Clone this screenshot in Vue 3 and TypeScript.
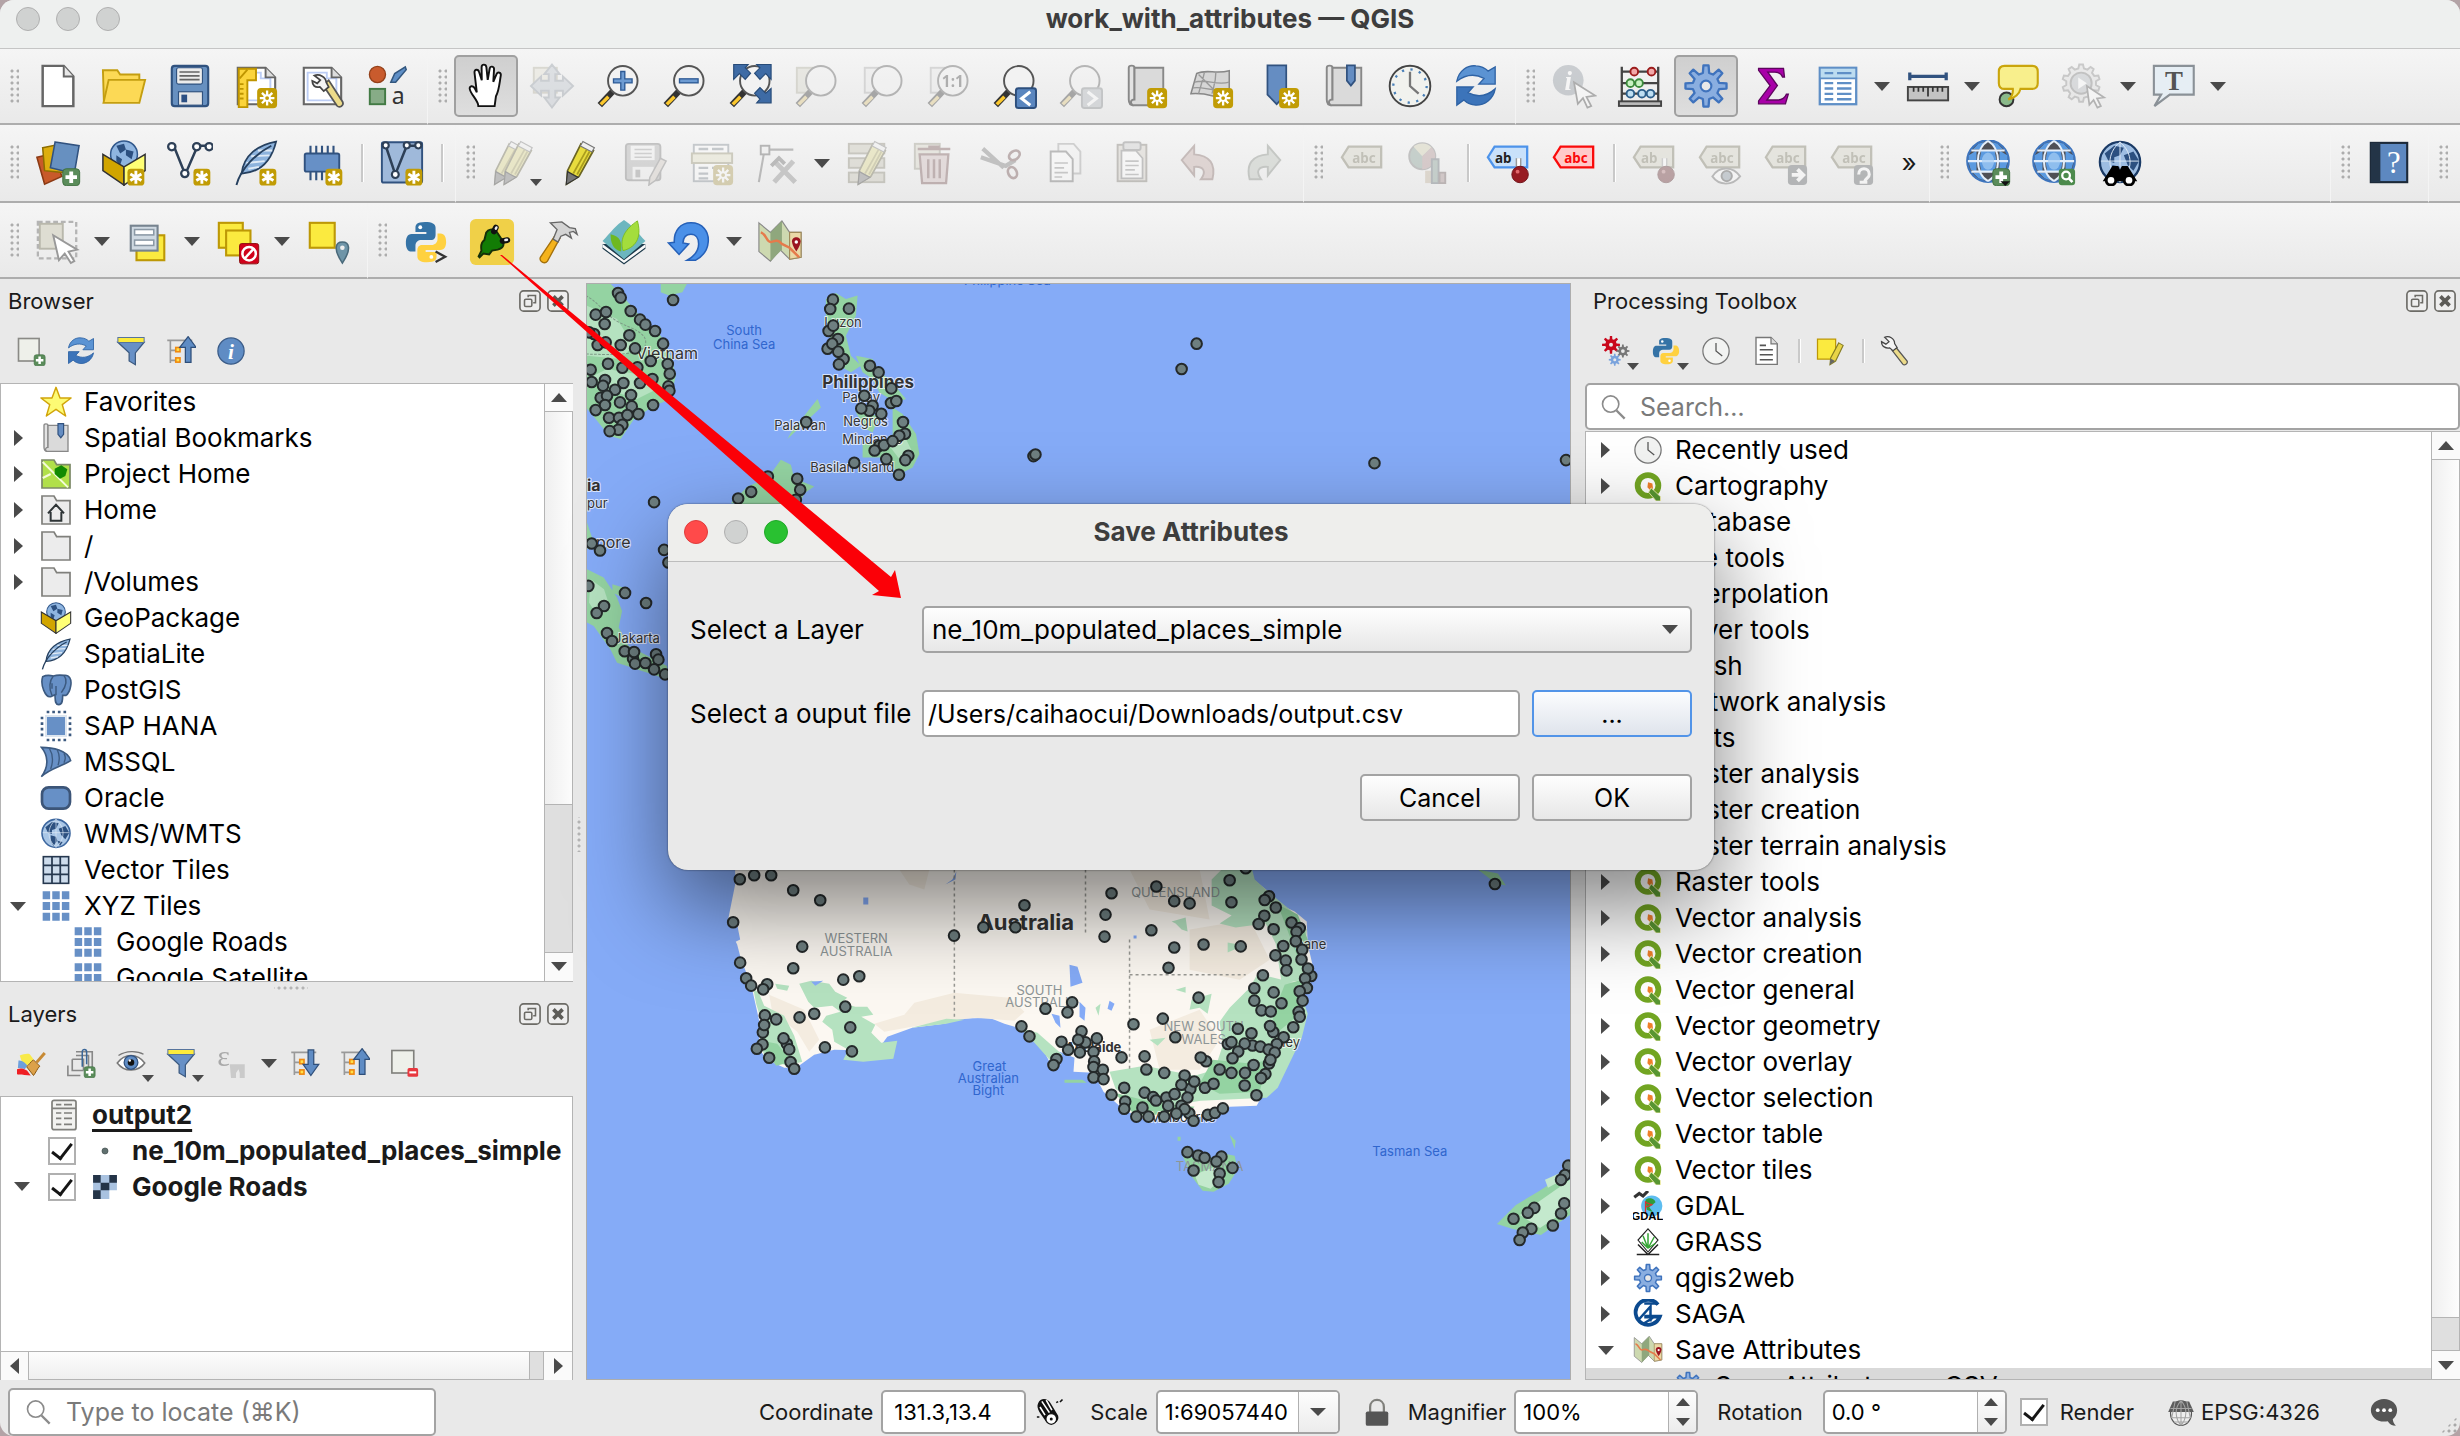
<script setup lang="ts">
import { ref } from 'vue'

type Point = [number, number]
interface Tool { icon: string; off?: boolean; on?: boolean; drop?: boolean; menu?: boolean; sep?: boolean; more?: boolean }
interface Group { tools: Tool[]; fill?: boolean }
interface Node { label: string; icon: string; arrow?: 'closed' | 'opened'; child?: boolean; current?: boolean }

/* ---- icon drawing helpers, all on a 24 x 24 grid ---- */
function gear(cx: number, cy: number, outer: number, inner: number, teeth: number): string {
  const pts: string[] = []
  const step = (Math.PI * 2) / teeth
  for (let i = 0; i < teeth; i++) {
    const a = i * step - Math.PI / 2
    const spots: [number, number][] = [[-0.3, inner], [-0.16, outer], [0.16, outer], [0.3, inner]]
    for (const [k, r] of spots) {
      pts.push(`${(cx + Math.cos(a + k * step) * r).toFixed(2)} ${(cy + Math.sin(a + k * step) * r).toFixed(2)}`)
    }
  }
  return `M${pts.join('L')}z`
}

const star = '<rect x="12.6" y="13" width="10.4" height="10.6" rx="2" fill="#c19c05"/><path d="M17.8 14.4v7.8M14 18.3h7.6M15.1 15.6l5.4 5.4M20.5 15.6l-5.4 5.4" stroke="#fff" stroke-width="1.2"/><circle cx="17.8" cy="18.3" r="1.5" fill="#c19c05" stroke="#fff"/>'
const flake = '<rect x="13.8" y="15" width="8.800" height="8.800" rx="1.8" fill="#c19c05"/><path d="M18.200 16v6.800M15.300 17.700l5.800 3.400M21.100 17.700l-5.800 3.400" stroke="#fff" stroke-width="1.500"/>'
const plus = '<rect x="14.500" y="15" width="8.800" height="8.800" rx="1.8" fill="#5a8c5a" stroke="#3f7040" stroke-width=".5"/><path d="M18.900 16.400v6M15.900 19.400h6" stroke="#fff" stroke-width="2"/>'
const lens = '<path d="M10 14l-7.500 8" stroke="#333" stroke-width="3.2"/><path d="M7 17.6l-4 4" stroke="#fcc82d" stroke-width="1.8"/><circle cx="14.5" cy="9.3" r="7.7" fill="#f2f2f2" stroke="#555" stroke-width="1"/>'
const page = '<path d="M2.5 2.5h14.5l5 5v14H2.5z" fill="#fff" stroke="#666" stroke-width="1.1"/><path d="M4.5 5h10v3h5v11.500h-15z" fill="none" stroke="#bccdf5" stroke-width="1"/><path d="M17 2.500v5h5" fill="#ddd" stroke="#666"/>'
const wrench = '<path d="M12.500 11.500l3-2.500 7.300 11.300c.8 2-1.700 3.400-3 2z" fill="#ecdb8a" stroke="#555" stroke-width=".9"/><path d="M8 6.500c2.800-1 6 .8 6.200 3.600l1.300 2.400-2.600 2.200-2-2.200c-2.500.6-4-.9-4-3.200l2.600 1.300 1.600-1.700z" fill="#f4f4f4" stroke="#444" stroke-width=".9"/>'
const globe = '<circle cx="12" cy="11" r="10.800" fill="#4f4f55" stroke="#3d74bd" stroke-width="1.200"/><path d="M8.500 5.500h7l1 5.500-1 5.500h-7l-1-5.500z" fill="#5b9ae0"/><path d="M2 8l4-2.500V11H1.800zM22 8l-4-2.500V11h4.200zM1.800 11.500H6v5l-3-1zM22.200 11.500H18v5l3-1zM7 2l3-1-2 4H4zM17 2l-3-1 2 4h4zM7 20l3 1-2-4H4zM17 20l-3 1 2-4h4z" fill="#5b9ae0"/><path d="M1.500 11h21M3.300 5.500h17.400M3.300 16.500h17.400M12 .5c-7 4-7 17 0 21M12 .5c7 4 7 17 0 21" fill="none" stroke="#e4eefa" stroke-width="1.100"/><ellipse cx="12" cy="11" rx="3.200" ry="4.500" fill="#a5cdf3" opacity=".7"/>'
const earth = '<circle cx="12" cy="11.500" r="10.500" fill="#a9c6e6" stroke="#3d679f" stroke-width="1.200"/><path d="M4 7l5-4 5 1-2 4-3 1v3l-3-1zM14 8l5-2 3 5-3 5-3-3zM8 13l4 1 1 3-3 4-2-4zM13 17l4 1-2 3z" fill="#2c5080"/><path d="M12 1v21M2 11h20M12 1c-7 6-7 15 0 21M12 1c7 6 7 15 0 21" fill="none" stroke="#dfeaf6" stroke-width=".5"/>'
const box = '<circle cx="12" cy="7.500" r="7" fill="#8fb5e0" stroke="#31588c" stroke-width=".8"/><path d="M8 3l4-1 1 3-3 2zM13 5l4 1-1 4-3-2zM8 8l3 2-1 3-2-2z" fill="#2c5080"/><path d="M1 7.500l11 6.500v9.500L1 16z" fill="#d1a500" stroke="#333" stroke-width=".8"/><path d="M23 7.500L12 14v9.500L23 16z" fill="#ffff75" stroke="#333" stroke-width=".8"/>'
const feather = '<path d="M22.500.8C13 2.500 5.500 8 4.500 17.500 14 17 20 11 22.500.8z" fill="#8db3dd" stroke="#26405f" stroke-width=".9"/><path d="M8 15l5.500-1M7 12l9.500-1M9.500 8.500L19 8M13 5.500h7.500" stroke="#dfeaf6"/><path d="M20 3C12 7 4 15 1.800 23.500" fill="none" stroke="#26405f" stroke-width="1"/>'
const pencil = '<path d="M12.500 2l6.500 3.500L11.500 19 5 23l.5-7z" fill="#e8dc3e" stroke="#6b6523" stroke-width=".9"/><path d="M13.500.8l6 3.200-1.300 2.300-6-3.200z" fill="#f0f0f0" stroke="#777" stroke-width=".6"/><path d="M15.500 5L8.500 17.500M17 6l-6.500 12" stroke="#aa9d1e" stroke-width=".9"/><path d="M5.500 16.500l5.500 3L4.800 23.200z" fill="#777" stroke="#333" stroke-width=".6"/>'
const python = '<path d="M11.500 1.500c-4.500 0-5 1.500-5 3v2.300h5.700v1H4.500C2.200 7.800 1.500 10 1.500 12.500s.8 4.500 3 4.500h2v-3c0-2 1.500-3 3-3h5c1.800 0 2.500-1.300 2.500-2.800V4.500c0-2-1.800-3-5.500-3z" fill="#3573a6"/><path d="M12.500 22.500c4.500 0 5-1.500 5-3v-2.300h-5.700v-1h7.700c2.300 0 3-2.200 3-4.200 0-2.500-.8-4.500-3-4.500h-1.500v3c0 1.800-1.500 3-3 3H10c-1.800 0-2.500 1.300-2.500 2.800v3.200c0 2 1.800 3 5 3z" fill="#ffd140"/><circle cx="9" cy="4.300" r="1" fill="#fff"/><circle cx="14.800" cy="19.800" r="1" fill="#fff"/>'
const refresh = '<path d="M2 9.500C3 4 7.500 1 12 1.500c3 .2 4.800 1.200 6.300 2.700L22 2v9h-8.500l2.700-3C11.500 5.500 6.500 6 2 9.500z" fill="#5b93d3" stroke="#2f63a5" stroke-width=".7"/><path d="M22 13.500c-1 5.500-5.500 8.500-10 8.500-3-.2-4.800-1.200-6.300-2.700L2 22v-9.500h8.500l-2.700 3c4.700 2.500 9.700 2 14.200-2z" fill="#3c74ba" stroke="#2f63a5" stroke-width=".7"/>'
const clock = '<circle cx="12" cy="12" r="10.600" fill="#f1f2ee" stroke="#444" stroke-width="1"/><circle cx="12" cy="12" r="8.700" fill="none" stroke="#4a80b8" stroke-width="1.200" stroke-dasharray="1.200 3.350"/><path d="M12 4.500V12l4.500 4" fill="none" stroke="#777" stroke-width="1.200"/>'
const thinClock = '<circle cx="12" cy="12" r="10.500" fill="#f2f3f2" stroke="#777" stroke-width="1"/><path d="M12 5.500V12l5 4" fill="none" stroke="#555" stroke-width="1"/>'
const book = '<path d="M3 2.500c0-1.500 3-1.500 3 0V19c-1 0-1 3-.5 3C3.500 22 3 21 3 19z" fill="#e3e3e3" stroke="#888"/><path d="M6 2.500h15v19.500H5c-1.500-1-1-3 1-3z" fill="#dadada" stroke="#888"/>'
const folder = '<path d="M1.500 1.500h9l2 3.500h10v17.500h-21z" fill="#ececec" stroke="#80807c" stroke-width="1.300"/>'
const funnel = '<path d="M1.500 5h21l-7 8.500V23l-5-3v-6.500z" fill="#6790c6" stroke="#3c5a80" stroke-width="1"/><rect x="1.500" y="1.200" width="21" height="4" fill="#fceb3c" stroke="#57749c" stroke-width=".8"/>'
const tag = (c: string, f: string, t: string) => `<path d="M1.500 9L5 3.500h17v10.800H5z" fill="${f}" stroke="${c}" stroke-width="1.200"/><text x="13" y="11.800" text-anchor="middle" font-family="Noto Sans, sans-serif" font-weight="700" font-size="7" fill="${c === '#4d93ea' ? '#222' : c}">${t}</text>`
const pin = '<path d="M17.500 14v-4.500" stroke="#999" stroke-width="3"/><path d="M17.500 14V9.500" stroke="#fff" stroke-width="1.500"/><circle cx="18.300" cy="18" r="4.300" fill="#971b22" stroke="#6f1016" stroke-width=".5"/><circle cx="17" cy="16.500" r="1" fill="#e26a6e"/>'
const tree = '<path d="M1 3.500h20M3.500 3.500v18M3.500 11.500h5M3.500 19.500h5" fill="none" stroke="#999" stroke-width="1.300"/><rect x="7.800" y="9.200" width="3.400" height="3.400" fill="#ffe14b" stroke="#f08a10" stroke-width="1.300"/><rect x="7.800" y="17.500" width="3.400" height="3.400" fill="#ffe14b" stroke="#f08a10" stroke-width="1.300"/>'
const map = '<path d="M1 2l6 5 6-6 4 6h6v13l-6 1-5-5-5 6-6-5z" fill="#cdd9b0" stroke="#888" stroke-width=".6"/><path d="M7 7l6-6v15l-6 6z" fill="#8fa77d"/><path d="M17 7h6v13l-6 1z" fill="#ead9a8" stroke="#a08b5a" stroke-width=".6"/><path d="M2 7c3 1 3 5 5 5s3-2 6 1l4 2 5 5" fill="none" stroke="#e57b4c" stroke-width="1.300"/><path d="M20.500 17c-4-6-1.800-7.500 0-7.500s4 1.500 0 7.500z" fill="#9b1420"/><circle cx="20.500" cy="12" r=".9" fill="#fff"/>'

const icons: Record<string, string> = {
  newDoc: '<path d="M4 1.500h11l5 5.500v15.500H4z" fill="#fff" stroke="#666" stroke-width="1.300"/><path d="M15 1.500V7h5" fill="#e8e8e8" stroke="#666"/>',
  open: '<path d="M1 3.800h7.500L10 6h10v5H5L1.500 20z" fill="#fcd955" stroke="#c49e10" stroke-width="1"/><path d="M4 8.800h19L20 20.800H1.300z" fill="#fcd955" stroke="#c49e10" stroke-width="1"/>',
  save: '<rect x="2.500" y="1.500" width="19" height="21" rx="1.500" fill="#6790c0" stroke="#30527f" stroke-width="1.100"/><rect x="5" y="2.500" width="13.500" height="8.500" rx="1" fill="#ececec" stroke="#30527f" stroke-width=".6"/><path d="M6.500 4.700h10.500M6.500 6.700h10.500M6.500 8.700h10.500" stroke="#666" stroke-width=".9"/><rect x="6" y="15" width="12.500" height="7" fill="#e8e8e8" stroke="#30527f" stroke-width=".6"/><rect x="7.500" y="16.500" width="3" height="4" fill="#2d5083"/>',
  layout: page + '<path d="M3 3h9v6H7.500v14H3z" fill="#fbd43b" stroke="#bf9500"/><path d="M3.500 8l4-4.500M3.500 11h2M3.500 13.500h2M3.500 16h2M3.500 18.500h2" stroke="#bf9500"/>' + star,
  layouts: page + wrench,
  style: '<circle cx="6.500" cy="6" r="4.200" fill="#c95b2d" stroke="#944019" stroke-width=".7"/><path d="M13.500 10l2-4.500L21 2l.5 1.500L16 10z" fill="#5f8fc6" stroke="#33577f" stroke-width=".8"/><rect x="2.500" y="13.500" width="8" height="8" fill="#87ac87" stroke="#427a44"/><text x="14" y="21.500" font-family="Noto Sans, sans-serif" font-size="12" fill="#333">a</text>',
  pan: '<path d="M8 22.500c0-3-4-6-4.500-9-.3-1.500 1.800-2 2.700-.2l1 2L6 5c-.2-1.800 2-2 2.400-.3L9.800 9 9.700 2.200c0-1.800 2.300-1.800 2.500 0l.7 6.600 1-5.800c.3-1.700 2.400-1.300 2.300.3l-.4 6.500 1.700-4c.7-1.500 2.500-.8 2.200.8-.7 4-.9 8-2.500 10.700l-.7 5.200z" fill="#fff" stroke="#111" stroke-width="1"/>',
  panSel: '<rect x="2.500" y="2.500" width="12" height="13" fill="#e6e3c4" stroke="#b5b08a"/><path d="M12 .8l4 5h-2.300v3.500h4V7L23 12l-5.300 5v-2.500h-4V18H16l-4 5.200L8 18h2.300v-3.500h-4V17L1 12l5.300-5v2.300h4V5.800H8z" fill="#b6c4d6" stroke="#8798ad"/>',
  zoomIn: lens + '<path d="M14.500 4v10.500M9.300 9.300h10.400" stroke="#2d5a95" stroke-width="2.800"/><path d="M14.500 4.800v9M10 9.300h9" stroke="#6d9bd2" stroke-width="1.400"/>',
  zoomOut: lens + '<path d="M9.300 9.300h10.400" stroke="#2d5a95" stroke-width="2.800"/><path d="M10 9.300h9" stroke="#6d9bd2" stroke-width="1.400"/>',
  zoomFull: lens + '<path d="M3.500.8H11L9.500 2.500l2.800 2.800-2.800 3.200-3-3L3.500 8.500zM23 .8h-7.500l1.700 1.700-2.800 2.800 2.800 3.200 3-3L23 8.500zM23 20.800h-7.500l1.700-2-2.800-3 2.800-3 3 3 2.800-2.500z" fill="#3e6ba5" stroke="#274b78" stroke-width=".6"/>',
  zoomSel: '<rect x="2" y="2.500" width="11" height="13" fill="#d9d7bd" stroke="#b0ad8a"/>' + lens,
  zoomLayer: '<rect x="3" y="2.500" width="11" height="13" fill="#e9e9e9" stroke="#aaa"/>' + lens,
  zoomNative: '<rect x="3" y="2.500" width="11" height="13" fill="#e9e9e9" stroke="#aaa"/>' + lens + '<text x="14.500" y="12.300" text-anchor="middle" font-family="Noto Sans, sans-serif" font-weight="700" font-size="8" fill="#444">1:1</text>',
  zoomLast: lens + '<rect x="13" y="13.200" width="10.500" height="10.300" rx="1.300" fill="#5a86bf" stroke="#2d4f7d"/><path d="M20.500 15l-4.500 3.500 4.500 3.500" fill="none" stroke="#fff" stroke-width="1.600"/>',
  zoomNext: lens + '<rect x="13" y="13.200" width="10.500" height="10.300" rx="1.300" fill="#a9b4c0" stroke="#7d858d"/><path d="M16 15l4.500 3.500L16 22" fill="none" stroke="#fff" stroke-width="1.600"/>',
  newMap: book + star,
  new3d: '<path d="M1 16L4 5.500C9 3 14 6 21 4v13c-6 3-9-2-20-1z" fill="#d6d6d6" stroke="#888" stroke-width=".8"/><path d="M3 10c6-2 11 2 18 0M8 5c-1 5-2 7-3 11M14 5c0 5-1 7-2 11M2 13c6-1 8 2 18 1M5 6l9 9" fill="none" stroke="#999" stroke-width=".7"/>' + star,
  newMark: '<path d="M6.500 1.200h9.800v15l-5 5.300-4.800-5z" fill="#658dc2" stroke="#31527f" stroke-width=".9"/>' + star,
  marks: book + '<path d="M13.500 1.200h4.200v8l-2.100 2.600-2.100-2.600z" fill="#658dc2" stroke="#31527f" stroke-width=".9"/>',
  clock, thinClock, refresh,
  identify: '<circle cx="9" cy="9" r="8" fill="#8393a5"/><text x="9" y="14" text-anchor="middle" font-family="Liberation Serif, serif" font-style="italic" font-weight="700" font-size="14" fill="#fff">i</text><path d="M12 10l11 7-4.500.7L21 22.500l-2 .8-2.300-5-2.700 3z" fill="#fff" stroke="#444" stroke-width=".9"/>',
  abacus: '<path d="M2.500 2v18M21.500 2v18M2.500 4.500h19M2.500 10.500h19M2.500 16h19" stroke="#444" stroke-width="1.200" fill="none"/><g stroke-width="1"><g fill="#f2a9a9" stroke="#9c1c1c"><circle cx="9" cy="4.500" r="2"/><circle cx="18" cy="4.500" r="2"/></g><g fill="#c9f2c3" stroke="#3c8a3c"><circle cx="7" cy="10.500" r="2"/><circle cx="11.500" cy="10.500" r="2"/></g><g fill="#bfdff2" stroke="#2d5f8a"><circle cx="7" cy="16" r="2"/><circle cx="13" cy="16" r="2"/><circle cx="17.500" cy="16" r="2"/></g></g><rect x="1" y="20" width="22" height="2.400" fill="#bbb" stroke="#444"/>',
  gear: `<path d="${gear(12, 12, 10.8, 7, 8)}" fill="#8aaee0" stroke="#3f73bd" stroke-width="1.200" stroke-linejoin="round"/><circle cx="12" cy="12" r="2.800" fill="#e8e8e8" stroke="#3f73bd" stroke-width="1.100"/>`,
  sigma: '<path d="M5 2.800h13l.5 4.500h-1c-.8-2-2-2.500-4-2.500H9.800l5 7-5.500 7.500h5.400c2.500 0 4-1 4.800-3h1L19 21.300H5v-1.500l6-8L5 3.800z" fill="#a800a8" stroke="#5d065d" stroke-width=".7"/>',
  table: '<rect x="2.500" y="2.500" width="19" height="19" fill="#fff" stroke="#5f8fc6" stroke-width="1.200"/><rect x="3" y="3" width="18" height="5" fill="#bcdcf0"/><path d="M2.500 8h19" stroke="#5f8fc6"/><path d="M5 5.300h4.500M11.500 5.300h7.500M5 10.500h4.500M11.500 10.500h7.500M5 13.300h4.500M11.500 13.300h7.500M5 16.100h4.500M11.500 16.100h7.500M5 18.900h4.500M11.500 18.900h7.500" stroke="#5f8fc6" stroke-width="1.200"/>',
  ruler: '<path d="M2.500 7h19M2.500 5v4M21.500 5v4" stroke="#31527f" stroke-width="1.700"/><rect x="1.500" y="12.500" width="21" height="7" fill="#c3c3c3" stroke="#444"/><path d="M4.500 12.500v2.500M7 12.500V15M9.500 12.500V15M12 12.500v5M14.500 12.500V15M17 12.500V15M19.500 12.500V15" stroke="#333" stroke-width=".9"/>',
  tips: '<circle cx="6" cy="19" r="3.600" fill="#8ab98a" stroke="#333"/><path d="M5 1.500h14.500c2 0 2.800 1 2.800 3v6c0 2.200-1 3-3 3h-6c-.5 2.500-3 5-6.300 5.500 2-1.500 2.500-3.500 2.300-5.500H5c-2 0-3-1-3-3v-6c0-2 1-3 3-3z" fill="#f8ef8c" stroke="#caa50c" stroke-width="1.100"/>',
  action: `<path d="${gear(10.5, 10.5, 9.8, 7.8, 10)}" fill="#ddd" stroke="#888"/><circle cx="10.500" cy="10.500" r="5.500" fill="#aeb9c2" stroke="#777"/><path d="M9 7.500l4.500 3L9 13.500z" fill="#fff"/><path d="M13.500 12l9 6-3.700.5 2 4-1.800.8-2-4-2.200 2.500z" fill="#fff" stroke="#555" stroke-width=".9"/>`,
  text: '<path d="M1.500 1.500h20.800v15H9.800L1.800 22.500l3.500-6H1.500z" fill="#e6eef4" stroke="#8a9197" stroke-width="1.100"/><text x="12" y="14" text-anchor="middle" font-family="Liberation Serif, serif" font-weight="700" font-size="14" fill="#555">T</text>',
  layers: '<path d="M1 9l9-2 4 12-9 4z" fill="#c85a2a" stroke="#8b3a14" stroke-width=".8"/><path d="M4 4l10-2 1 15-10-1z" fill="#ddae0f" stroke="#8d6d00" stroke-width=".8"/><path d="M10.500 1l12.500 2-2.500 14.500L8 14.500z" fill="#6790c0" stroke="#31527f" stroke-width=".8"/>' + plus,
  geopkg: box + flake,
  box, feather,
  shape: '<path d="M3.500 3l6 15 6.500-15h5" fill="none" stroke="#2e4057" stroke-width="1.300"/><g fill="#fff" stroke="#2e4057" stroke-width="1.200"><circle cx="2.500" cy="3.500" r="1.900"/><circle cx="9.300" cy="17.500" r="1.900"/><circle cx="15.500" cy="3.500" r="1.900"/><circle cx="22" cy="3.500" r="1.900"/></g>' + flake,
  newFeather: feather + flake,
  chip: '<path d="M6 3v18M9 3v18M12 3v18M15 3v18M18 3v18" stroke="#31527f" stroke-width="1.100"/><rect x="3" y="7" width="18" height="9.500" rx="1" fill="#6790c6" stroke="#31527f"/>' + flake,
  virtual: '<rect x="1.500" y="1.200" width="21" height="21" rx="1" fill="#9fb9da" stroke="#31527f" stroke-width="1"/><path d="M3.500 3l5 15 6-15h7" fill="none" stroke="#2e4057" stroke-width="1.300"/><g fill="#fff" stroke="#2e4057" stroke-width="1.100"><circle cx="3.500" cy="2.800" r="1.600"/><circle cx="8.500" cy="18" r="1.800"/><circle cx="14.500" cy="2.800" r="1.600"/><circle cx="20.500" cy="2.800" r="1.600"/></g>' + flake,
  pencils: '<g transform="translate(-3 0)">' + pencil + '</g><g transform="translate(2 0)">' + pencil + '</g>', pencil,
  saveEdit: '<rect x="1.500" y="2" width="18" height="19" rx="1.500" fill="#aaa" stroke="#777"/><rect x="4" y="3" width="12.500" height="7.500" fill="#f2f2f2"/><path d="M6 5h9M6 7h9M6 9h9" stroke="#999" stroke-width=".8"/><rect x="5" y="14" width="11" height="6.500" fill="#eee"/><rect x="6.500" y="15.500" width="2.500" height="4" fill="#888"/><path d="M19.500 9.500l3 1.500-5.500 10-3.500 2.500.5-4z" fill="#d8c8b8" stroke="#777" stroke-width=".8"/>',
  addRec: '<rect x="2.500" y="2.500" width="18" height="19" fill="#fff" stroke="#789" stroke-width="1"/><rect x="1.500" y="7" width="21" height="5" fill="#e8e2a8" stroke="#998f50"/><path d="M5 4.700h5M12 4.700h6M5 14.500h5M12 14.500h3M5 17.500h5M5 20h5" stroke="#789" stroke-width="1.200"/>' + star,
  vertex: '<path d="M5 5L2 22M5 5h15" stroke="#666" stroke-width="1.100"/><rect x="3" y="3" width="4.500" height="4.500" fill="#eee" stroke="#555"/><path d="M10 11l11 11M10 22L20 11" stroke="#888" stroke-width="2.600"/><path d="M8.500 13.500l4-4 3 3" fill="none" stroke="#666" stroke-width="2"/>',
  multiEdit: '<g fill="#c8c3a0" stroke="#8b8560"><rect x="2" y="2" width="18.500" height="5"/><rect x="2" y="9.500" width="18.500" height="5"/><rect x="2" y="17" width="18.500" height="5"/></g><g transform="translate(2 0)">' + pencil + '</g>',
  trash: '<rect x="2" y="2" width="13" height="13" fill="#d8d5b5" stroke="#999674"/><path d="M4.500 7.500h15l-1.200 15H5.800z" fill="#e0b5b5" stroke="#8f4a4a" stroke-width="1.200"/><path d="M3.500 4.700h17M9 3.500h6M9 10v10M12 10v10M15 10v10" stroke="#8f4a4a" stroke-width="1.300"/>',
  cut: '<path d="M2 9l13 4.500 5-3M3 4.500l11 10" fill="none" stroke="#777" stroke-width="2.200"/><ellipse cx="19.500" cy="8" rx="3" ry="2.200" fill="none" stroke="#844" stroke-width="1.400" transform="rotate(-35 19.500 8)"/><ellipse cx="18.500" cy="17" rx="2.200" ry="3" fill="none" stroke="#844" stroke-width="1.400" transform="rotate(-25 18.500 17)"/>',
  copy: '<path d="M8 2h8l3.500 4v11.500H8z" fill="#f4f4f4" stroke="#999"/><path d="M4 6h8l3.500 4v11.500H4z" fill="#fff" stroke="#666"/><path d="M6 12h7M6 14.500h5M6 17h7M6 19.300h4" stroke="#888" stroke-width=".9"/>',
  paste: '<rect x="4.500" y="2.500" width="15" height="19" fill="#d8cfba" stroke="#7d7462"/><path d="M6.500 5.500h7.500l3.500 4V20h-11z" fill="#fff" stroke="#777" stroke-width=".9"/><rect x="7.500" y="1.200" width="9" height="4" rx="1" fill="#ccc" stroke="#777"/><path d="M8.500 11h7M8.500 13.300h7M8.500 15.600h5M8.500 18h7" stroke="#888" stroke-width=".9"/>',
  undo: '<path d="M3.500 10.500L10 3v4.500c8 .5 11.500 5 9.500 13h-6c3-4 1.500-7-3.500-6.500v4.500z" fill="#d8a49a" stroke="#96635a"/>',
  redo: '<path d="M20.500 10.500L14 3v4.500c-8 .5-11.500 5-9.500 13h6c-3-4-1.500-7 3.500-6.500v4.500z" fill="#b5c2b2" stroke="#7c8878"/>',
  label: tag('#7a7548', '#d5d2b2', 'abc'),
  diagram: '<circle cx="9" cy="8.500" r="6.800" fill="#6fa08c" stroke="#777"/><path d="M9 8.500L4.500 3.500a6.800 6.800 0 0 1 9.300.3z" fill="#d5cf8f"/><path d="M9 8.500l4.800-4.700A6.800 6.800 0 0 1 9 15.300z" fill="#c58787"/><path d="M10.500 16h3.500v6.500h-3.500z" fill="#cfae80"/><path d="M14 10h3.500v12.500H14z" fill="#6fa08c" stroke="#567"/><path d="M18 17h3v5.500h-3z" fill="#b78585" stroke="#755"/>',
  labelPin: tag('#4d93ea', '#c9e1fa', 'ab').replace('x="13"', 'x="9.500"') + pin,
  labelRed: tag('#fa0a0a', '#ffc9c9', 'abc'),
  labelPinOff: tag('#7a7548', '#d5d2b2', 'ab').replace('x="13"', 'x="9.500"') + pin,
  labelEye: tag('#7a7548', '#d5d2b2', 'abc') + '<path d="M8 19c4-6 11-5 14.500 0-4 5-11 5-14.500 0z" fill="#fff" stroke="#666"/><circle cx="15.500" cy="18.800" r="2.700" fill="#7896ad" stroke="#444"/>',
  labelMove: tag('#7a7548', '#d5d2b2', 'abc') + '<rect x="13" y="13" width="10" height="10.500" rx="2" fill="#555c63"/><path d="M15 18.200h5M18 15.300l3 3-3 3" fill="none" stroke="#fff" stroke-width="2"/>',
  labelTurn: tag('#7a7548', '#d5d2b2', 'abc') + '<rect x="13" y="13" width="10" height="10.500" rx="2" fill="#555c63"/><path d="M15.500 18c0-4 5.500-4 5.500 0 0 2-2 1.500-2.500 4M16 22h4" fill="none" stroke="#fff" stroke-width="1.600"/>',
  globeAdd: globe + plus + '<path d="M18.500 21.500h5L21 24z" fill="#111"/>',
  globeFind: globe + '<rect x="14.500" y="15" width="8.500" height="8.600" rx="1.600" fill="#4c8a4c"/><circle cx="18.300" cy="18.500" r="2" fill="none" stroke="#fff" stroke-width="1.200"/><path d="M19.800 20l1.800 2" stroke="#fff" stroke-width="1.400"/>',
  binoc: earth.replace('#a9c6e6', '#9dbde2').replace('#3d679f', '#1b3b66') + '<path d="M8 13.500h3l1 2 1-2h3l5 8H3z" fill="#000"/><circle cx="7.300" cy="21" r="2.500" fill="#fff" stroke="#000" stroke-width="1.500"/><circle cx="16.700" cy="21" r="2.500" fill="#fff" stroke="#000" stroke-width="1.500"/>',
  help: '<rect x="2.500" y="1.500" width="19" height="20.500" fill="#5d88c0" stroke="#1c2938" stroke-width="1.100"/><rect x="2.500" y="1.500" width="5" height="20.500" fill="#233447"/><text x="14.500" y="17" text-anchor="middle" font-family="Liberation Serif, serif" font-size="16" fill="#fff">?</text>',
  select: '<rect x="1.500" y="1.500" width="20" height="19" fill="none" stroke="#b4b4b4" stroke-width="1.200" stroke-dasharray="2.500 1.500"/><rect x="2.500" y="2.500" width="12" height="13" fill="#deddd2" stroke="#b9b8ac"/><path d="M9.500 8.500l12.500 7.500-4.500 1 3 5-1.800 1-3.200-5-3 3.500z" fill="#fff" stroke="#999" stroke-width="1"/>',
  form: '<rect x="6" y="8.500" width="14.500" height="13" fill="#fbea3f" stroke="#bd9806" stroke-width="1.100"/><rect x="3" y="3.500" width="14" height="13" fill="#cfd9e2" stroke="#76838f" stroke-width="1.100"/><rect x="5" y="5.500" width="10" height="2.800" fill="#fff" stroke="#8a98a5" stroke-width=".8"/><rect x="5" y="11" width="10" height="2.800" fill="#fff" stroke="#8a98a5" stroke-width=".8"/>',
  deselect: '<rect x="2" y="2" width="12.500" height="13" fill="#fbea3f" stroke="#bd9806" stroke-width="1.100"/><rect x="5.800" y="6" width="12.700" height="13" fill="#fbea3f" stroke="#bd9806" stroke-width="1.100"/><rect x="12.800" y="12.800" width="10" height="10.600" rx="1.200" fill="#d0021b" stroke="#8d1010" stroke-width=".5"/><circle cx="17.800" cy="18.100" r="3.500" fill="none" stroke="#fff" stroke-width="1.300"/><path d="M15.500 20.600l4.600-5" stroke="#fff" stroke-width="1.300"/>',
  selLoc: '<rect x="2.500" y="2" width="13" height="13" fill="#fbea3f" stroke="#bd9806" stroke-width="1.100"/><path d="M19.500 23c-5-7.500-3.500-11 0-11s5 3.500 0 11z" fill="#6f95a8" stroke="#49697a" stroke-width=".8"/><circle cx="19.500" cy="15" r="1.200" fill="#eee"/>',
  python, pythonCon: python + '<path d="M17 17l5 2.700-5 2.700" fill="none" stroke="#333" stroke-width="1.200"/>',
  plug: '<rect x=".5" y="0" width="23" height="24" rx="3" fill="#f0d048"/><path d="M5 19.500l1.500-3c-.5-3 0-4.500 1.500-5.500l1-4c1-1.500 3-2 5-1l4 6c.3 2-1 3.500-3 4l-3 .5-1.500 2-3-.5L5.500 20z" fill="#127c05" stroke="#143008" stroke-width="1"/><path d="M13 6.500l1-2M17.500 11.500l2.500-.5" stroke="#111" stroke-width="3" stroke-linecap="round"/><path d="M14 5l.3-.6M19 11l.8-.2" stroke="#eee" stroke-width="1.300" stroke-linecap="round"/>',
  hammer: '<path d="M10.500 8.500l2.500 1.500-6.500 12c-1.500 1.800-4.500.2-3.700-2z" fill="#f5b31c" stroke="#a3700b" stroke-width=".7"/><path d="M8 2l6-.5 4 3 3 .5 1 3-2-1.500-2 .5 1 3-3-2-2.500 1-1.500 3-2.500-1.500 2-5z" fill="#d4d4d4" stroke="#666" stroke-width=".7"/>',
  leaf: '<path d="M.8 15.500L12 23.800l11.200-8.300V13H.8z" fill="#1d3a4b"/><path d="M.8 13L12 21.500 23.200 13v1.800L12 23 .8 14.800z" fill="#fafafa"/><path d="M.8 11.500C5 7 8 3 12 .5c4 2.500 7 6.500 11.200 11L12 21z" fill="#6cb6bf"/><path d="M5 8c5 1 6 4 5.500 9C6 16 5 12 5 8z" fill="#6eb821"/><path d="M19 1c2 7 .5 13.500-7.500 15.500C9.500 10 13 5 19 1z" fill="#a4dd3c" stroke="#7ebd1e" stroke-width=".5"/>',
  revert: '<path d="M.8 12.500l3-.3C3.500 6 7 2 12.500 2c6 0 9.500 4.500 9 10-.3 4.500-3 7.500-6.500 9.500h-4.500c4.500-2.500 6-5 6-8.500 0-3-1.500-5-4-5-2.700 0-4 1.700-4.200 4.500l3 .5-5 5.500z" fill="#4a90e8" stroke="#2560b8" stroke-width=".8"/>',
  map,
  addItem: '<rect x="2" y="2" width="16.500" height="18" fill="#eef0ea" stroke="#8a8a86" stroke-width="1.300"/>' + plus,
  funnel,
  collapse: tree + '<path d="M15.500 21V9H11l6.700-8.500L24 9h-4v12z" fill="#5f8cc4" stroke="#2f4f7a" stroke-width="1"/>',
  expand: tree + '<path d="M14.500 1.500V13H10.500l6.200 9L23 13h-4V1.500z" fill="#5f8cc4" stroke="#2f4f7a" stroke-width="1"/>',
  info: '<circle cx="12" cy="12" r="10.500" fill="#5f8cc4" stroke="#3b5c88"/><text x="12" y="18" text-anchor="middle" font-family="Liberation Serif, serif" font-style="italic" font-weight="700" font-size="17" fill="#fff">i</text>',
  brush: '<path d="M3 6c3-1 6-2 8-1l3 4-5 5-4-2z" fill="#f8ea4a"/><path d="M2 10c2 0 5 1 7 4l-2 3c-2-1-4-1-5.500-1z" fill="#6d9fdd"/><path d="M.8 17c2-1 5-1 8 1l3 4c-3-.5-7 0-11-1z" fill="#ef1f24"/><path d="M8.500 15c2-1.500 3-4 5.500-5.500l5 5c-2 2-3 5-5 7.500z" fill="#dca14a" stroke="#8c5a15" stroke-width=".8"/><path d="M16.500 11.500L23 4" stroke="#c78a34" stroke-width="2.400"/>',
  addGroup: '<path d="M8 6h10v12M5 9v9h9M5 9h9v9M8 3h13v14M1.500 14v8h10" fill="none" stroke="#888" stroke-width="1.300"/><path d="M13 15V3c0-2.500 3.500-2.500 3.500 0v10" fill="none" stroke="#3b6798" stroke-width="1.200"/>' + plus,
  eye: '<path d="M1 12c6-8 16-8 22 0-5 7-16 8-22 0z" fill="#fff" stroke="#777" stroke-width="1.200"/><path d="M2 6c6-4 15-4 20-1" fill="none" stroke="#777" stroke-width="1.100"/><circle cx="12" cy="11.500" r="5.500" fill="#5f8cc4" stroke="#31527f"/><circle cx="12" cy="11.500" r="2.600" fill="#111"/><circle cx="11" cy="10" r="1" fill="#fff"/>',
  eps: '<text x="1" y="14" font-family="Liberation Serif, serif" font-size="24" fill="#444">ε</text><path d="M11 13h12v11h-4v-4l-1-3-2 3v4h-4z" fill="#999"/>',
  remove: '<rect x="1.500" y="2" width="17.500" height="18" fill="#eef0ea" stroke="#80807c" stroke-width="1.300"/><rect x="14" y="16" width="8.500" height="7" rx="1.300" fill="#e8383f"/><path d="M15.500 19.500h5.500" stroke="#fff" stroke-width="1.700"/>',
  gears: `<path d="${gear(8, 7, 7.2, 4.6, 8)}" fill="#c9081c"/><circle cx="8" cy="7" r="1.600" fill="#e9e9e9"/><path d="${gear(17.5, 12, 5.3, 3.6, 8)}" fill="#777"/><circle cx="17.500" cy="12" r="1.500" fill="#e9e9e9"/><path d="${gear(11, 19, 4.8, 3.2, 8)}" fill="#7aa3dc"/><circle cx="11" cy="19" r="1.200" fill="#e9e9e9"/>`,
  doc: '<path d="M4 1.200h12l5 5v16.500H4z" fill="#fff" stroke="#777" stroke-width="1.100"/><path d="M16 1.200v5h5" fill="#ddd" stroke="#777"/><path d="M7 7.500h5M7 11h10.500M7 15h10.500M7 19h10.500" stroke="#555" stroke-width="1.300"/>',
  note: '<rect x="2" y="2.500" width="14.500" height="16" fill="#fbea3f" stroke="#bd9806" stroke-width="1"/><path d="M19 5.500l3.500 2-6 12.500-4.500 3 .5-5.500z" fill="#e8d447" stroke="#857c22" stroke-width=".9"/><path d="M12.500 18l3.500 2-4.200 3z" fill="#666"/>',
  wrench: '<path d="M10.500 11.500l3-2.500 9 11c.8 2-2 4-3.500 2.500z" fill="#ecdb8a" stroke="#555" stroke-width="1"/><path d="M4.500 1c3.500-1.500 8 .8 8 5l2 3.200-3.300 2.600-2.700-2.300C5.500 10 2 8.500 2 4.500L5.500 6.500l2.500-2z" fill="#f4f4f4" stroke="#444" stroke-width="1"/>',
  fav: '<path d="M12 1l3 8h8.300l-6.600 5 2.500 8.500L12 17.500l-7.200 5L7.300 14 .7 9H9z" fill="#fdfb74" stroke="#d1a50a" stroke-width="1.100" stroke-linejoin="round"/>',
  markSm: book + '<path d="M13.500 1.200h4.200v8l-2.100 2.600-2.100-2.600z" fill="#658dc2" stroke="#31527f" stroke-width=".9"/>',
  projHome: '<path d="M1.500 1.500h9l2 3.500h10v17.500h-21z" fill="#b1e04a" stroke="#7d8a68" stroke-width="1.300"/><path d="M2 3l19 19M2 15l6-3" stroke="#f4fbd9" stroke-width="1.500"/><path d="M11 8l5-2.500 4.500 3-1.500 5-4 2-4-3.500z" fill="#118a02"/>',
  home: folder + '<path d="M6 14.500L12 8l6 6.500M8 13.500V20h8v-6.500" fill="none" stroke="#2e3436" stroke-width="1.500"/>',
  folder,
  elephant: '<path d="M2 2c3-1.500 6-1 8-.5C13 .5 16 .8 18 1c4-.5 6 3 5 8-.5 3-2 6-3.500 7H17c0 3 0 7-3 7s-2.500-4-2.800-7.500L8 17c-4 1-8-9-6-15z" fill="#6790c6" stroke="#3c5a80" stroke-width="1.200"/><path d="M10 1.500C7 5 6.500 11 9 16M18 1c3 4 1 9-2 13M12 9v7M9 7v4" fill="none" stroke="#3c5a80" stroke-width="1.100"/>',
  hana: '<rect x="4.500" y="4.500" width="15" height="15" fill="#6790c6" stroke="#dde6f0" stroke-width="1.500"/><path d="M5 1.500h15M5 22.500h15M1.500 5v15M22.500 5v15" stroke="#3c5a80" stroke-width="2" stroke-dasharray="2 2.200"/>',
  mssql: '<path d="M1 1c8 0 20 2 22 10-6 4-16 6-22 12 6-8 5-16 0-22z" fill="#6790c6" stroke="#3c5a80" stroke-width="1.200"/><path d="M7 1.700c3 5 3 10 1 15.500M13 3c2 4 2 7 .5 11.500M18 5.500c1.500 3 1 4.500 0 7" fill="none" stroke="#3c5a80" stroke-width="1"/>',
  oracle: '<rect x="1.500" y="4" width="21" height="16" rx="5" fill="#6790c6" stroke="#3c5578" stroke-width="2"/>',
  wms: earth,
  vtile: '<rect x="2.500" y="2" width="19" height="20" fill="#cddcec" stroke="#26384f" stroke-width="1.200"/><path d="M9 2v20M15.200 2v20M2.500 8.600h19M2.500 15.200h19" stroke="#26384f" stroke-width="1.300"/>',
  xyz: '<g fill="#6790c6"><path d="M2 1h5.600v6H2zM9.200 1h5.600v6H9.200zM16.400 1H22v6h-5.600zM2 9h5.600v6H2zM9.200 9h5.600v6H9.200zM16.400 9H22v6h-5.600zM2 17h5.600v6H2zM9.200 17h5.600v6H9.200zM16.400 17H22v6h-5.600z"/></g>',
  q: '<circle cx="12" cy="11.500" r="8.300" fill="#fff" stroke="#72a522" stroke-width="4.600"/><path d="M12 9l3.500 1 .5 4-2 1.500-2.500-2.500z" fill="#ef7f2a"/><path d="M14.500 13.500l7.500 7V24h-3.500L12.500 17z" fill="#589632" stroke="#f5f0b0" stroke-width=".7"/>',
  gdal: '<circle cx="15" cy="12" r="8.500" fill="#5dbdf0"/><path d="M10 7c4-3 8 0 8 2l-5 4 3 4-5-2z" fill="#2f9c3a"/><path d="M1 5l4-3 3 2 4-4" fill="none" stroke="#333" stroke-width="2.500"/><path d="M10 8v10M10 9l5 2-5 2" fill="none" stroke="#d33"/><text x="11.500" y="23.500" text-anchor="middle" font-family="Liberation Sans, sans-serif" font-weight="700" font-size="9" fill="#000">GDAL</text>',
  grass: '<path d="M12 1.500l8 9L12 20l-8-9.500z" fill="#fff" stroke="#222" stroke-width=".9"/><path d="M12 17L8 7M12 17l0-12M12 17l5-9M12 17l-5-5M12 17l6-4" stroke="#35a535" stroke-width="1.200"/><path d="M4 14l8 8 8-8M3 22h18" fill="none" stroke="#222" stroke-width="1.200"/>',
  saga: '<path d="M20 4.500A10 10 0 1 0 21.500 14H9" fill="none" stroke="#0b4a8f" stroke-width="3"/><path d="M5 16L14 6v12M9 3.500h11M8 20l8-5" stroke="#0b4a8f" stroke-width="2" fill="none"/>',
  csv: '<rect x="3" y="1" width="18" height="22" rx="1.500" fill="#f2f2f0" stroke="#80807c" stroke-width="1.300"/><path d="M3 7h18M6 4.200h4M12 4.200h6M6 10.500h4M12 10.500h6M6 14.500h4M12 14.500h6M6 19h4M12 19h6" stroke="#80807c" stroke-width="1.300"/>',
  dot: '<circle cx="12" cy="12" r="2.800" fill="#60706f" stroke="#3c4848" stroke-width=".6"/>',
  raster: '<path d="M1 1h22v14h-7v8H1z" fill="#a9c2e0"/><path d="M1 1h7v7H1zM16 1h7v7h-7zM8 8h8v7H8zM1 15h7v8H1z" fill="#243447"/>',
  lensSm: '<circle cx="10" cy="9.500" r="7" fill="none" stroke="#8b8b8b" stroke-width="1.400"/><path d="M15 15l7 7" stroke="#8b8b8b" stroke-width="2"/>',
  mouse: '<path d="M2.500 5c2-5 8-4 10 0l6 10c1.500 5-5 9-9.500 5L3.500 12C2 9 1.500 7 2.500 5z" fill="#111"/><path d="M5.500 3.500l6 9M9 2.500l4.500 8M4 8l4 6.500" stroke="#fff" stroke-width="1.300"/><circle cx="13" cy="17.500" r="4.300" fill="#fff" stroke="#111"/><circle cx="13" cy="17.500" r="1.200" fill="#111"/><path d="M17 4.500l1.500-.8M20 4l2-2M1.500 16h2" stroke="#111" stroke-width="1.300"/>',
  lock: '<path d="M6.500 12V8c0-7.500 11-7.500 11 0v4" fill="none" stroke="#80807c" stroke-width="1.800"/><rect x="3" y="11.500" width="18" height="11.500" rx="1.500" fill="#555"/>',
  crs: '<ellipse cx="12" cy="13" rx="9" ry="10.500" fill="#eee" stroke="#555" stroke-width="1"/><path d="M5 3h14l4 9H1z" fill="#5c5c5c"/><path d="M12 2.500v21M3 9h18M3.500 17h17M6 20.500h12M12 2.500c-6 6-5 15 0 21M12 2.500c6 6 5 15 0 21M7 3L4 17M17 3l3 14" fill="none" stroke="#a5a5a5" stroke-width=".9"/>',
  chat: '<path d="M12 1.500c6 0 10.500 4 10.500 9 0 3-1.500 5.500-3.500 7.300.2 2 1 3.700 2.500 5.200-3 0-5-1.200-6.500-3.600-8 1.500-13.500-3.400-13.500-8.900 0-5 4.500-9 10.500-9z" fill="#545454"/><g fill="#fff"><circle cx="7" cy="10.500" r="1.500"/><circle cx="12" cy="10.500" r="1.500"/><circle cx="17" cy="10.500" r="1.500"/></g>',
  float: '<rect x="1" y="1" width="22" height="22" rx="4" fill="#eee" stroke="#6c6b66" stroke-width="1.800"/><rect x="6" y="10" width="8" height="8" rx="1.500" fill="none" stroke="#6c6b66" stroke-width="1.700"/><path d="M10 8V6h8v8h-2.500" fill="none" stroke="#6c6b66" stroke-width="1.700"/>',
  close: '<rect x="1" y="1" width="22" height="22" rx="4" fill="#eee" stroke="#6c6b66" stroke-width="1.800"/><path d="M7 7l10 10M17 7L7 17" stroke="#5c5b57" stroke-width="4"/>',
}

const t = (names: string): Tool[] => names.split(' ').map((n) => {
  const [icon, ...flags] = n.split(':')
  const has = (f: string) => flags.includes(f)
  return { icon: icon === '|' || icon === '>>' ? '' : icon, sep: icon === '|', more: icon === '>>', off: has('off'), on: has('on'), drop: has('drop'), menu: has('menu') }
})

const rows: Group[][] = [
  [
    { tools: t('newDoc open save layout layouts style') },
    { tools: t('pan:on panSel:off zoomIn zoomOut zoomFull zoomSel:off zoomLayer:off zoomNative:off zoomLast zoomNext:off newMap new3d newMark marks clock refresh') },
    { tools: t('identify:off abacus gear:on sigma table:drop ruler:drop tips action:off:drop text:drop'), fill: true },
  ],
  [
    { tools: t('layers geopkg shape newFeather chip | virtual |') },
    { tools: t('pencils:off:menu pencil saveEdit:off addRec:off vertex:off:drop multiEdit:off trash:off cut:off copy:off paste:off undo:off redo:off') },
    { tools: t('label:off diagram:off | labelPin labelRed | labelPinOff:off labelEye:off labelMove:off labelTurn:off >>') },
    { tools: t('globeAdd globeFind binoc'), fill: true },
    { tools: t('help') },
    { tools: [] },
  ],
  [
    { tools: t('select:drop form:drop deselect:drop selLoc') },
    { tools: t('pythonCon plug hammer leaf revert:drop map'), fill: true },
  ],
]

const browser: Node[] = [
  { label: 'Favorites', icon: 'fav' },
  { label: 'Spatial Bookmarks', icon: 'markSm', arrow: 'closed' },
  { label: 'Project Home', icon: 'projHome', arrow: 'closed' },
  { label: 'Home', icon: 'home', arrow: 'closed' },
  { label: '/', icon: 'folder', arrow: 'closed' },
  { label: '/Volumes', icon: 'folder', arrow: 'closed' },
  { label: 'GeoPackage', icon: 'box' },
  { label: 'SpatiaLite', icon: 'feather' },
  { label: 'PostGIS', icon: 'elephant' },
  { label: 'SAP HANA', icon: 'hana' },
  { label: 'MSSQL', icon: 'mssql' },
  { label: 'Oracle', icon: 'oracle' },
  { label: 'WMS/WMTS', icon: 'wms' },
  { label: 'Vector Tiles', icon: 'vtile' },
  { label: 'XYZ Tiles', icon: 'xyz', arrow: 'opened' },
  { label: 'Google Roads', icon: 'xyz', child: true },
  { label: 'Google Satellite', icon: 'xyz', child: true },
]

const qgis = ['Cartography', 'Database', 'File tools', 'Interpolation', 'Layer tools', 'Mesh', 'Network analysis', 'Plots', 'Raster analysis', 'Raster creation', 'Raster terrain analysis', 'Raster tools', 'Vector analysis', 'Vector creation', 'Vector general', 'Vector geometry', 'Vector overlay', 'Vector selection', 'Vector table', 'Vector tiles']
const toolbox: Node[] = [
  { label: 'Recently used', icon: 'thinClock', arrow: 'closed' },
  ...qgis.map((label): Node => ({ label, icon: 'q', arrow: 'closed' })),
  { label: 'GDAL', icon: 'gdal', arrow: 'closed' },
  { label: 'GRASS', icon: 'grass', arrow: 'closed' },
  { label: 'qgis2web', icon: 'gear', arrow: 'closed' },
  { label: 'SAGA', icon: 'saga', arrow: 'closed' },
  { label: 'Save Attributes', icon: 'map', arrow: 'opened' },
  { label: 'Save Attributes as CSV', icon: 'gear', child: true, current: true },
]

function sheetPoints(ox: number, oy: number, kx: number, ky: number, list: Point[]): Point[] {
  return list.map(([x, y]): Point => [ox + x / kx, oy + y / ky])
}
const places: Point[] = [
  ...sheetPoints(580, 280, 3, 3, [[117, 42], [125, 56], [282, 63], [155, 96], [50, 107], [81, 99], [77, 135], [183, 122], [199, 137], [228, 156], [151, 169], [45, 165], [30, 160], [56, 198], [80, 190], [125, 198], [252, 194], [168, 208], [215, 246], [35, 272], [87, 254], [130, 266], [175, 265], [266, 255], [272, 284], [38, 309], [78, 303], [72, 320], [133, 312], [108, 332], [183, 312], [220, 300], [268, 322], [271, 335], [65, 356], [84, 350], [156, 348], [78, 378], [123, 370], [158, 382], [222, 378], [50, 393], [178, 405], [90, 416], [120, 416], [145, 408], [130, 437], [118, 452], [92, 456], [761, 62], [753, 90], [809, 89], [748, 156], [762, 140], [776, 180], [745, 209], [759, 194], [793, 240], [777, 218], [779, 256], [872, 260], [898, 280], [936, 328], [855, 350], [880, 380], [870, 395], [846, 388], [906, 404], [935, 372], [951, 366], [971, 429], [977, 464], [960, 470], [900, 500], [886, 514], [914, 498], [940, 486], [921, 540], [987, 530], [978, 543], [825, 551], [959, 587], [681, 429], [566, 592], [654, 599], [663, 632], [516, 638], [477, 658], [650, 662], [225, 669], [1362, 531], [1368, 526], [38, 793], [63, 814], [255, 812], [268, 850], [28, 920], [138, 941], [201, 971], [75, 980], [53, 1001], [84, 1061], [99, 1085], [137, 1116], [162, 1138], [168, 1153], [165, 1118], [231, 1125], [238, 1141], [199, 1151], [225, 1170], [258, 1185]]),
  ...sheetPoints(1080, 280, 3, 3, [[351, 194], [306, 270], [884, 552], [1458, 543]]),
  ...sheetPoints(650, 850, 3, 3, [[272, 89], [315, 77], [366, 77], [432, 122], [513, 152], [252, 218], [459, 291], [273, 339], [432, 356], [582, 390], [630, 380], [291, 386], [306, 408], [354, 404], [342, 419], [347, 497], [381, 509], [341, 548], [345, 526], [451, 503], [495, 492], [588, 471], [603, 533], [413, 582], [403, 566], [420, 599], [340, 584], [323, 597], [360, 624], [527, 593], [608, 605], [424, 637], [435, 657], [914, 258], [1002, 233], [1098, 233], [1125, 167], [1386, 131], [1368, 195], [1365, 261], [1188, 477], [1254, 488], [1268, 458], [1116, 530], [1140, 560], [1236, 576], [1308, 578], [1296, 545], [1286, 570], [1342, 566], [1256, 600], [1291, 608], [1332, 606], [1221, 628], [1212, 646], [1416, 623], [1334, 635], [1332, 652], [1360, 660], [1332, 683], [1362, 688], [1386, 735], [1424, 714], [1427, 755], [1424, 777]]),
  ...sheetPoints(1020, 850, 2.8, 2.676, [[383, 99], [433, 138], [476, 144], [588, 82], [593, 141], [633, 50], [369, 216], [515, 254], [433, 262], [619, 259], [417, 316], [698, 125], [686, 135], [717, 155], [685, 177], [669, 199], [761, 195], [784, 210], [775, 220], [711, 213], [773, 245], [738, 258], [716, 283], [791, 268], [745, 297], [789, 294], [747, 323], [816, 338], [807, 318], [799, 345], [804, 370], [784, 379], [681, 336], [657, 371], [711, 382], [657, 404], [733, 411], [792, 404], [501, 396], [677, 430], [703, 433], [781, 434], [784, 447], [401, 452], [319, 467], [611, 479], [649, 491], [710, 488], [701, 472], [766, 475], [436, 502], [739, 502], [583, 520], [593, 515], [652, 524], [630, 519], [674, 527], [720, 520], [697, 535], [714, 543], [612, 540], [596, 558], [698, 572], [702, 562], [350, 553], [355, 588], [405, 597], [522, 566], [507, 556], [655, 576], [560, 588], [593, 597], [631, 597], [688, 600], [676, 611], [462, 604], [478, 640], [489, 620], [519, 637], [543, 626], [630, 631], [453, 629], [663, 657], [350, 650], [374, 662], [382, 671], [411, 663], [434, 654], [470, 663], [344, 690], [416, 685], [453, 685], [475, 705], [462, 694], [327, 714], [361, 714], [405, 714], [439, 706], [487, 725], [527, 709], [547, 704], [569, 692], [470, 809], [500, 818], [518, 824], [565, 821], [551, 834], [596, 851], [487, 858], [560, 866], [557, 889], [1330, 92], [1535, 845], [1526, 870], [1515, 883], [1524, 946], [1515, 973], [1440, 958], [1422, 971], [1382, 987], [1492, 1005], [1432, 1014], [1408, 1024], [1399, 1044]]),
]

const layerOn = ref(true)
const roadsOn = ref(true)
const render = ref(true)
const outFile = ref('/Users/caihaocui/Downloads/output.csv')
const coordinate = ref('131.3,13.4')
const scale = ref('1:69057440')
const magnifier = ref('100%')
const rotation = ref('0.0 °')
</script>

<template>
  <div class="app">
    <header class="titlebar">
      <div class="lights"><i></i><i></i><i></i></div>
      <h1>work_with_attributes — QGIS</h1>
    </header>

    <div v-for="(row, r) in rows" :key="r" class="toolrow" :class="'row' + r">
      <div v-for="(g, i) in row" :key="i" class="group" :class="{ fill: g.fill }">
        <span class="grip"></span>
        <template v-for="(tool, k) in g.tools" :key="k">
          <span v-if="tool.sep" class="sep"></span>
          <button v-else-if="tool.more" class="more" aria-label="More">»</button>
          <template v-else>
            <button class="tool" :class="{ on: tool.on, off: tool.off, menu: tool.menu }" :aria-label="tool.icon">
              <svg viewBox="0 0 24 24" fill="none" v-html="icons[tool.icon]"></svg>
            </button>
            <button v-if="tool.drop" class="drop" :aria-label="tool.icon + ' menu'"></button>
          </template>
        </template>
      </div>
    </div>

    <main class="work">
      <aside class="side-left">
        <div class="dock-title"><h2>Browser</h2>
          <button aria-label="Float Browser"><svg viewBox="0 0 24 24" v-html="icons.float"></svg></button>
          <button aria-label="Close Browser"><svg viewBox="0 0 24 24" v-html="icons.close"></svg></button>
        </div>
        <div class="dock-tools">
          <button v-for="n in ['addItem', 'refresh', 'funnel', 'collapse', 'info']" :key="n" :aria-label="n"><svg viewBox="0 0 24 24" v-html="icons[n]"></svg></button>
        </div>
        <div class="tree browser-tree">
          <ul>
            <li v-for="n in browser" :key="n.label" :class="{ child: n.child }">
              <span class="twist" :class="n.arrow"></span>
              <svg viewBox="0 0 24 24" v-html="icons[n.icon]"></svg><span>{{ n.label }}</span>
            </li>
          </ul>
          <div class="vscroll browser-scroll"><b class="up"></b><i></i><b class="down"></b></div>
        </div>
        <div class="hsplit"></div>
        <div class="dock-title"><h2>Layers</h2>
          <button aria-label="Float Layers"><svg viewBox="0 0 24 24" v-html="icons.float"></svg></button>
          <button aria-label="Close Layers"><svg viewBox="0 0 24 24" v-html="icons.close"></svg></button>
        </div>
        <div class="dock-tools">
          <button aria-label="Style"><svg viewBox="0 0 24 24" v-html="icons.brush"></svg></button>
          <button aria-label="Add group"><svg viewBox="0 0 24 24" v-html="icons.addGroup"></svg></button>
          <button aria-label="Themes" class="menu"><svg viewBox="0 0 24 24" v-html="icons.eye"></svg></button>
          <button aria-label="Filter" class="menu"><svg viewBox="0 0 24 24" v-html="icons.funnel"></svg></button>
          <button aria-label="Expression filter" class="off"><svg viewBox="0 0 24 24" v-html="icons.eps"></svg></button>
          <button aria-label="Expression menu" class="drop"></button>
          <button aria-label="Expand"><svg viewBox="0 0 24 24" v-html="icons.expand"></svg></button>
          <button aria-label="Collapse"><svg viewBox="0 0 24 24" v-html="icons.collapse"></svg></button>
          <button aria-label="Remove"><svg viewBox="0 0 24 24" v-html="icons.remove"></svg></button>
        </div>
        <div class="tree layer-tree">
          <ul>
            <li class="table-layer"><svg viewBox="0 0 24 24" v-html="icons.csv"></svg><u>output2</u></li>
            <li><span class="twist"></span><label><input v-model="layerOn" type="checkbox"><svg viewBox="0 0 24 24" v-html="icons.dot"></svg>ne_10m_populated_places_simple</label></li>
            <li><span class="twist opened"></span><label><input v-model="roadsOn" type="checkbox"><svg viewBox="0 0 24 24" v-html="icons.raster"></svg>Google Roads</label></li>
          </ul>
          <div class="hscroll"><b class="prev"></b><i></i><b class="next"></b></div>
        </div>
      </aside>

      <div class="vsplit"></div>

      <section class="canvas">
        <svg viewBox="588 284 982 1096" preserveAspectRatio="xMidYMid slice">
          <rect x="0" y="0" width="2460" height="1900" fill="#85abf7" />
          <g transform="translate(580 280) scale(.33333)">
            <g fill="#94d3a2">
              <path d="M0 0H80l50 50 60 70 55 50 30 60 15 60-15 70-50 20-60 40-40 60-35-10-40-50L0 360z" />
              <path d="M245 12h80l-15 28-40 10-25-10zM740 60l30-18 30 18 35-10-5 60-30 60 15 60 30 30-30 20-35-20-30-90-10-50zM830 230l50 10 20 40 30 20 50 60-30 10-50-30-20-40-30-20zM715 360l10 25-100 95 10-20zM830 400l70 10-20 50-20-10zM940 385l30 20 40 60 10 60-20 40-40 20-50-50-60 0 0-40 90-20zM455 672l50-50 60-25 40-55 30 15 10 40 60 25-30 20-20 50zM24 730l20 60-20 20zM24 870l50 25 40 60 15 40-10 50 30 55 115 60v40l-150-50-20-40-50-70-20-10zM100 915l50 15-10 30-40-20z" />
            </g>
            <g fill="#b5e2c0"><path d="M24 80l90 40 50 80-40 40-100-10zM24 300l60-30 120 20 30 40-60 30-60-20zM35 900l40 30 20 60-40 20-25-40zM930 500l50-20 20 40-40 20z" /></g>
            <path d="M20 50c40 20 60 60 100 80s80 30 80 60-40 40-180 35" fill="none" stroke="#7d9a86" stroke-width="3" stroke-dasharray="8 4" />
          </g>
          <path d="M736 866L736 885 732 905 728 925 738 945 742 960 752 985 756 1003 762 1030 758 1047 768 1060 785 1068 797 1068 815 1055 835 1050 878 1051 888 1037 913 1028 945 1024 960 1019 990 1018 1005 1024 1022 1029 1040 1043 1050 1062 1055 1068 1060 1052 1075 1058 1074 1072 1094 1073 1104 1092 1122 1108 1137 1117 1150 1121 1165 1117 1180 1120 1192 1121 1205 1115 1230 1107 1257 1106 1262 1097 1270 1075 1285 1045 1295 1030 1300 1015 1303 1000 1310 985 1314 970 1308 945 1307 922 1295 912 1280 905 1270 893 1254 880 1250 866z" fill="#fcf8f2" />
          <path d="M905 1015l10-12 40-10 55 5 15 14-10 9-40-3-40 5-50 9-10-8zM1130 870h70l10 50-60-10zM1190 930l60-10 20 40-30 20-50-10zM1150 1030l50-20 20 30-20 30-40 0zM770 995l35 15 15 30-10 12-12-20-25-20zM900 870h30l-5 20-15-5z" fill="#f4ece0" />
          <path d="M754 988l6 6 5 12 20 10 10 20 8 26-15 4-22-8-5-14 2-20-6-20zM776 984l14 2-2 5-10-2zM800 984l12-3 18 3 6 8 12 6-6 5 14 4 12 0 6 8-12 2 14 8-4 8 10 10 16-2-4 18-30 3-20-2 5-10-14-8-2-12-10-8 4-6 14-4-8-6-18 2-6-6zM912 1028l35-4 18-4-18-1zM1020 1028l18 5 25 22-12 6-16-18zM1110 1072l35-6 50 10 20-6 8-24-3-24 10-14 20-20 8-14 40 10 10 30-6 24-24 50-11 10-66 3-38 6-27-4-20-14zM1212 880l12-12h28l3 12 18 16 22 18 12 16-3 50-22 4-6-40-10-20-30 4-16-4 12-8-20-10z" fill="#b5e2c0" />
          <path d="M1213 1060l40 4 15-4-8 32-40 2-20-10zM1285 985l20-6-6 36-24 20-2-20zM1115 1093l40 10 40 4-10 8-50 0zM758 1040l20 4 15 18-16 4zM1278 905l20 10 12 30-10 18zM1065 1080l18 0 4 3-22 0zM1230 1135l6 6-1 8z" fill="#94d3a2" />
          <path d="M1172 922l14-4 2 14-6-2-6-6zM1228 943l16 3-16 7zM1192 1000l20-6-4 20-8-6-10 2zM1176 990l10-3 0 6zM1096 1008l5-4-2 12zM1150 1040l16-2-8 8z" fill="#b5e2c0" />
          <path d="M1183 1156l22 4 20-6 10 2 3 14-9 14-15 8-11-1-10-13zM1178 1137h3v4h-3zM1497 1224l19-19 22-13 14-9 18-3v35l-29 20-28-6zM1478 870l20 4 8 12-10-2z" fill="#94d3a2" />
          <path d="M1195 1175l20-8 8 10-12 12-12-4zM1520 1215l50-35v28l-30 20zM1545 1180l22-10 3 6-22 12z" fill="#c4e9cd" />
          <path d="M1070 965l8 2 5 16-12 4zM946 885l10-5 1-8-4 8zM864 898h5v7h-5zM1110 1001l5 3-3 7-4-2zM1080 1002l6 6-1 13-5-4zM1052 1014l8 2 1 12-5-5zM725 925l12-5 4 20-10 5zM812 982l12-1-8 5zM1134 936h3v3h-3z" fill="#85abf7" />
          <g fill="none" stroke="#999994" stroke-width="1.500" stroke-dasharray="3 3"><path d="M955 870V1018M1086 870v66M1130 940v130M1130 975h116" /></g>
          <g class="place" font-size="13">
            <text x="637" y="360" font-size="16">Vietnam</text><text x="825" y="328">Luzon</text>
            <text x="823" y="389" font-size="17" font-weight="700">Philippines</text><text x="843" y="403">Panay</text>
            <text x="775" y="431">Palawan</text><text x="844" y="427">Negros</text><text x="843" y="445">Mindanao</text><text x="811" y="473">Basilan Island</text>
            <text x="588" y="492" font-weight="700" font-size="16">ia</text><text x="588" y="509">pur</text><text x="588" y="549" font-size="16">apore</text><text x="615" y="644">Jakarta</text>
            <text x="978" y="930" font-size="22" font-weight="700">Australia</text>
            <text x="1296" y="949">bane</text><text x="1066" y="1052" font-weight="700">Adelaide</text><text x="1278" y="1047">ney</text><text x="1150" y="1122">Melbourne</text>
          </g>
          <g class="region"><text x="857" y="943">WESTERN</text><text x="857" y="956">AUSTRALIA</text><text x="1040" y="995">SOUTH</text><text x="1042" y="1007">AUSTRALIA</text><text x="1176" y="897">QUEENSLAND</text><text x="1204" y="1031">NEW SOUTH</text><text x="1204" y="1044">WALES</text><text x="1210" y="1171">TASMANIA</text></g>
          <g class="sea"><text x="745" y="336">South</text><text x="745" y="350">China Sea</text><text x="990" y="1071">Great</text><text x="989" y="1083">Australian</text><text x="989" y="1095">Bight</text><text x="1410" y="1156">Tasman Sea</text><text x="1008" y="286">Philippine Sea</text></g>
          <g fill="#6e7f80" stroke="#24292a" stroke-width="2"><circle v-for="(p, i) in places" :key="i" :cx="p[0]" :cy="p[1]" r="5.300" /></g>
        </svg>
      </section>

      <aside class="side-right">
        <div class="dock-title"><h2>Processing Toolbox</h2>
          <button aria-label="Float Toolbox"><svg viewBox="0 0 24 24" v-html="icons.float"></svg></button>
          <button aria-label="Close Toolbox"><svg viewBox="0 0 24 24" v-html="icons.close"></svg></button>
        </div>
        <div class="dock-tools">
          <button aria-label="Models" class="menu"><svg viewBox="0 0 24 24" v-html="icons.gears"></svg></button>
          <button aria-label="Scripts" class="menu"><svg viewBox="0 0 24 24" v-html="icons.python"></svg></button>
          <button aria-label="History"><svg viewBox="0 0 24 24" v-html="icons.thinClock"></svg></button>
          <button aria-label="Results"><svg viewBox="0 0 24 24" v-html="icons.doc"></svg></button>
          <span class="sep"></span>
          <button aria-label="Edit in place"><svg viewBox="0 0 24 24" v-html="icons.note"></svg></button>
          <span class="sep"></span>
          <button aria-label="Options"><svg viewBox="0 0 24 24" v-html="icons.wrench"></svg></button>
        </div>
        <label class="search"><svg viewBox="0 0 24 24" fill="none" v-html="icons.lensSm"></svg><input type="text" placeholder="Search…" aria-label="Search"></label>
        <div class="tree toolbox-tree">
          <ul>
            <li v-for="n in toolbox" :key="n.label" :class="{ child: n.child, current: n.current }">
              <span class="twist" :class="n.arrow"></span>
              <svg viewBox="0 0 24 24" v-html="icons[n.icon]"></svg><span>{{ n.label }}</span>
            </li>
          </ul>
          <div class="vscroll toolbox-scroll"><b class="up"></b><i></i><b class="down"></b></div>
        </div>
      </aside>
    </main>

    <footer class="status">
      <label class="locate"><svg viewBox="0 0 24 24" fill="none" v-html="icons.lensSm"></svg><input type="text" placeholder="Type to locate (⌘K)" aria-label="Type to locate"></label>
      <label for="coord">Coordinate</label>
      <input id="coord" v-model="coordinate" class="field coord" type="text">
      <button class="plain" aria-label="Toggle extents"><svg viewBox="0 0 24 24" v-html="icons.mouse"></svg></button>
      <label for="scale">Scale</label>
      <div class="field combo"><input id="scale" v-model="scale" type="text"><button aria-label="Scale list"></button></div>
      <button class="plain lock" aria-label="Lock scale"><svg viewBox="0 0 24 24" v-html="icons.lock"></svg></button>
      <label for="mag">Magnifier</label>
      <div class="field spin"><input id="mag" v-model="magnifier" type="text"><span><button aria-label="More"></button><button aria-label="Less"></button></span></div>
      <label for="rot" class="rot-label">Rotation</label>
      <div class="field spin"><input id="rot" v-model="rotation" type="text"><span><button aria-label="More"></button><button aria-label="Less"></button></span></div>
      <label class="render"><input v-model="render" type="checkbox">Render</label>
      <button class="crs"><svg viewBox="0 0 24 24" v-html="icons.crs"></svg>EPSG:4326</button>
      <button class="plain chat" aria-label="Messages"><svg viewBox="0 0 24 24" v-html="icons.chat"></svg></button>
      <span class="size-grip"></span>
    </footer>

    <form class="dialog" @submit.prevent>
      <div class="dialog-bar"><div class="lights"><i class="red"></i><i></i><i class="green"></i></div><h2>Save Attributes</h2></div>
      <div class="dialog-body">
        <label for="layer">Select a Layer</label>
        <div class="select"><select id="layer"><option>ne_10m_populated_places_simple</option></select></div>
        <label for="out">Select a ouput file</label>
        <div class="pair"><input id="out" v-model="outFile" type="text"><button type="button" class="focus">...</button></div>
        <div class="actions"><button type="button">Cancel</button><button type="submit">OK</button></div>
      </div>
    </form>

    <svg class="pointer" viewBox="0 0 402 344"><path d="M0 0L2 0 391 322 395 315 401 343 372 340 379 336z" fill="#fb0007" /></svg>
  </div>
</template>

<style>
body { background: #b3a3a6; }
</style>

<style scoped>
* { box-sizing: border-box; }
.app { position: relative; height: 100vh; min-width: 1900px; display: flex; flex-direction: column; overflow: hidden; border-radius: 14px; background: #e9e9e9; color: #1a1a1a; font: 25px/36px Inter, "Noto Sans", sans-serif; }
button { padding: 0; border: 0; background: none; font: inherit; color: inherit; }
input, select { font: inherit; color: inherit; min-width: 0; }
svg { display: block; flex: none; }
h1, h2, ul { margin: 0; padding: 0; font: inherit; list-style: none; }

.titlebar { flex: none; height: 49px; display: flex; align-items: center; padding-bottom: 10px; background: #eef0ef; border-bottom: 1px solid #c5c5c5; }
.titlebar h1 { flex: 1; padding-right: 120px; text-align: center; font-size: 26px; font-weight: 700; color: #3d3d3d; }
.lights { flex: none; display: flex; gap: 16px; }
.lights i { flex: none; width: 24px; height: 24px; border-radius: 50%; background: #d0d2d1; border: 1px solid #afafaf; }
.titlebar .lights { padding-left: 16px; width: 120px; }
.lights .red { background: #ff4a4a; border-color: #e03b3b; }
.lights .green { background: #29c131; border-color: #1fa828; }

.toolrow { flex: none; display: flex; height: 76px; background: linear-gradient(#f5f5f5, #e9e9e9); }
.row1 { height: 78px; }
.group { position: relative; display: flex; align-items: center; padding: 0 6px 0 25px; border-bottom: 2px solid #adadad; border-right: 1px solid #f4f4f4; }
.row2 .group { padding-top: 3px; }
.group.fill { flex: 1; }
.group:last-child { border-right: 0; }
.grip { position: absolute; left: 10px; top: 20px; width: 9px; height: 36px; background: radial-gradient(circle at 2px 2px, #adadad 1px, transparent 2px) 0 0 / 6px 6px; }
.tool { position: relative; flex: none; width: 64px; height: 62px; margin: 0 1px; display: flex; align-items: center; justify-content: center; border: 2px solid transparent; border-radius: 5px; }
.tool svg { width: 46px; height: 46px; }
.tool.on { background: linear-gradient(#cfcfcf, #dedede); border-color: #a0a0a0; }
.off svg { opacity: .38; filter: grayscale(.5); }
.menu { position: relative; }
.menu::after { content: ""; position: absolute; right: 2px; bottom: 6px; border: 6px solid transparent; border-top: 7px solid #4a4a4a; border-bottom: 0; }
.drop { flex: none; width: 24px; height: 40px; display: flex; align-items: center; justify-content: center; }
.drop::after { content: ""; border: 8px solid transparent; border-top: 9px solid #4a4a4a; border-bottom: 0; }
.tool + .drop::after { margin-right: 3px; }
.sep { flex: none; width: 3px; height: 38px; margin: 0 5px 0 6px; border-left: 2px solid #c9c9c9; background: #fff; }
.more { width: 28px; margin-left: 10px; font-size: 26px; line-height: 40px; text-align: center; }

.work { flex: 1; min-height: 0; display: flex; }
.side-left { flex: none; width: 573px; display: flex; flex-direction: column; }
.side-right { flex: none; width: 875px; margin-left: 14px; display: flex; flex-direction: column; }
.dock-title { flex: none; height: 46px; display: flex; align-items: center; gap: 6px; padding: 0 4px 2px 8px; font-size: 22px; }
.dock-title h2 { flex: 1; }
.dock-title svg { width: 22px; height: 22px; }
.dock-tools { flex: none; height: 58px; display: flex; align-items: center; padding: 0 0 7px 7px; }
.dock-tools button:not(.drop) { width: 48px; height: 48px; margin-right: 2px; display: flex; align-items: center; justify-content: center; }
.dock-tools svg { width: 30px; height: 30px; }
.dock-tools .menu::after { right: 1px; bottom: 5px; }
.dock-tools .sep { height: 24px; }

.tree { min-height: 0; display: flex; background: #fff; border: 1px solid #b4b4b4; color: #000; font-size: 26px; }
.browser-tree { flex: 599 1 0; }
.layer-tree { flex: 283 1 0; flex-direction: column; }
.toolbox-tree { flex: 1; margin-top: 1px; }
.tree ul { flex: 1; min-width: 0; min-height: 0; overflow: hidden; }
.tree li { height: 36px; display: flex; align-items: center; white-space: nowrap; }
.tree li > svg { width: 32px; height: 32px; margin-right: 12px; }
.toolbox-tree li > svg { width: 30px; height: 30px; }
.twist { flex: none; width: 39px; height: 36px; display: flex; align-items: center; padding-left: 13px; }
.child .twist { width: 71px; }
.toolbox-tree .twist { width: 47px; padding-left: 15px; }
.toolbox-tree .child .twist { width: 87px; }
.twist.closed::after { content: ""; border: 8px solid transparent; border-left: 9px solid #4a4a4a; border-right: 0; }
.twist.opened { padding-left: 9px; }
.toolbox-tree .twist.opened { padding-left: 12px; }
.twist.opened::after { content: ""; border: 8px solid transparent; border-top: 9px solid #4a4a4a; border-bottom: 0; }
.current { background: #d9d9d9; }

.vscroll { flex: none; width: 28px; display: flex; flex-direction: column; border-left: 1px solid #b4b4b4; background: linear-gradient(90deg, #efefef, #fdfdfd); }
.vscroll b, .hscroll b { flex: none; width: 28px; height: 28px; display: flex; align-items: center; justify-content: center; background: #fafafa; }
.vscroll .up { border-bottom: 1px solid #b4b4b4; }
.vscroll i { margin-top: auto; background: #dfdfdf; border: solid #b4b4b4; border-width: 1px 0; }
.browser-scroll i { height: 25%; }
.toolbox-scroll i { height: 34px; }
.vscroll b::after, .hscroll b::after { content: ""; border: 8px solid transparent; }
.vscroll .up::after { border-bottom: 9px solid #4a4a4a; border-top: 0; }
.vscroll .down::after { border-top: 9px solid #4a4a4a; border-bottom: 0; }
.hscroll { flex: none; height: 28px; display: flex; border-top: 1px solid #b4b4b4; background: linear-gradient(#fdfdfd, #efefef); }
.hscroll .prev { border-right: 1px solid #b4b4b4; }
.hscroll .prev::after { border-right: 9px solid #4a4a4a; border-left: 0; }
.hscroll .next::after { border-left: 9px solid #4a4a4a; border-right: 0; }
.hscroll i { width: 15px; margin-left: auto; background: #dfdfdf; border: solid #b4b4b4; border-width: 0 1px; }
.hsplit { flex: none; height: 10px; padding: 0 265px 0 274px; background: radial-gradient(circle at 3px 6px, #b4b4b4 1px, transparent 2px) 0 0 / 6px 10px; background-clip: content-box; }
.vsplit { flex: none; width: 13px; padding: 538px 0 528px 4px; background: radial-gradient(circle at 6px 3px, #b4b4b4 1px, transparent 2px) 0 0 / 10px 6px; background-clip: content-box; }

.layer-tree li { font-weight: 700; color: #1a1a1a; }
.layer-tree .table-layer { padding-left: 47px; }
.layer-tree .table-layer svg { width: 32px; height: 34px; }
.table-layer u { text-decoration-thickness: 3px; text-underline-offset: 5px; text-decoration-skip-ink: none; }
.layer-tree .twist { width: 47px; padding-left: 13px; }
.layer-tree label { display: flex; align-items: center; }
.layer-tree label svg { width: 26px; height: 26px; margin: 0 14px 0 16px; }
input[type="checkbox"] { appearance: none; flex: none; width: 28px; height: 28px; margin: 0; background: #fff; border: 2px solid #b0b0b0; display: flex; align-items: center; justify-content: center; }
input[type="checkbox"]:checked::after { content: ""; width: 9px; height: 17px; border: solid #151515; border-width: 0 3px 3px 0; transform: rotate(38deg); margin-bottom: 4px; }

.canvas { flex: 1; min-width: 0; border: 1px solid #adadad; margin-top: 4px; }
.canvas svg { width: 100%; height: 100%; }
.place { fill: #333; font-family: Inter, sans-serif; paint-order: stroke; stroke: #ffffffb0; stroke-width: 2px; }
.region { fill: #8d9596; font: 13px Inter, sans-serif; text-anchor: middle; }
.sea { fill: #3066ce; font: 13px Inter, sans-serif; text-anchor: middle; }

.search, .locate { display: flex; align-items: center; background: #fff; border: 2px solid #a3a3a3; border-radius: 5px; }
.search { flex: none; height: 47px; padding-left: 12px; gap: 13px; }
.search svg, .locate svg { width: 28px; height: 28px; }
.search input, .locate input { flex: 1; border: 0; outline: 0; padding: 0; background: none; }
::placeholder { color: #7a7a7a; opacity: 1; }

.status { position: relative; flex: none; height: 56px; display: flex; align-items: center; padding: 7px 60px 0 8px; font-size: 22px; }
.locate { width: 428px; height: 48px; margin-right: auto; padding-left: 14px; gap: 14px; font-size: 25px; }
.status > label:not(.locate) { flex: none; margin-right: 8px; }
.field { flex: none; height: 44px; background: #fff; border: 2px solid #a3a3a3; border-radius: 5px; color: #000; }
.coord { width: 145px; padding: 0 11px; }
.plain { width: 32px; height: 36px; display: flex; align-items: center; justify-content: center; }
.plain svg { width: 30px; height: 30px; }
.coord + .plain { margin: 0 24px 0 8px; }
.combo, .spin { width: 184px; display: flex; overflow: hidden; }
.combo input, .spin input { flex: 1; border: 0; padding: 0 0 0 7px; background: none; }
.combo button { width: 40px; border-left: 1px solid #b0b0b0; background: linear-gradient(#fdfdfd, #ececec); display: flex; align-items: center; justify-content: center; }
.combo button::after { content: ""; border: 8px solid transparent; border-top: 8px solid #4a4a4a; border-bottom: 0; }
.plain.lock { margin: 0 15px 0 21px; }
.spin span { width: 28px; display: flex; flex-direction: column; border-left: 1px solid #b0b0b0; background: linear-gradient(#fdfdfd, #ececec); }
.spin button { flex: 1; display: flex; align-items: center; justify-content: center; }
.spin button::after { content: ""; border: 7px solid transparent; border-bottom: 8px solid #4a4a4a; border-top: 0; }
.spin button:last-child::after { border-bottom: 0; border-top: 8px solid #4a4a4a; }
.status > .rot-label:not(.locate) { margin: 0 20px 0 19px; }
.render { display: flex; align-items: center; gap: 12px; margin-left: 13px; }
.crs { display: flex; align-items: center; margin-left: 23px; gap: 4px; }
.crs svg { width: 32px; height: 28px; }
.chat { margin-left: 48px; }
.size-grip { position: absolute; right: 2px; bottom: 2px; width: 18px; height: 18px; background: radial-gradient(circle at 3px 3px, #a8a8a8 1px, transparent 2px) 0 0 / 6px 6px; clip-path: polygon(100% 0, 100% 100%, 0 100%); }

.dialog { position: absolute; left: 668px; top: 504px; width: 1046px; border-radius: 20px; background: #e9e9e9; color: #000; box-shadow: 0 0 2px rgba(0, 0, 0, .6), 0 36px 90px rgba(0, 0, 0, .5); }
.dialog-bar { height: 58px; display: flex; align-items: center; padding: 0 16px 2px; background: #eeeeec; border-bottom: 1px solid #bdbdbd; border-radius: 20px 20px 0 0; }
.dialog-bar .lights { width: 104px; }
.dialog-bar h2 { flex: 1; padding-right: 104px; text-align: center; font-size: 26px; font-weight: 700; color: #3d3d3d; }
.dialog-body { display: grid; grid-template-columns: 222px 1fr; column-gap: 10px; row-gap: 37px; align-items: center; padding: 44px 22px 49px; }
.dialog-body label, .select select { font-size: 26px; }
.dialog-body label { white-space: nowrap; }
.dialog-body button, .select select, .dialog-body input { height: 47px; border: 2px solid #a3a3a3; border-radius: 5px; background: linear-gradient(#fefefe, #e7e7e7); }
.dialog-body button { width: 160px; flex: none; }
.select { position: relative; }
.select select { display: block; appearance: none; width: 100%; padding: 0 8px; }
.select::after { content: ""; position: absolute; right: 14px; top: 19px; border: 8px solid transparent; border-top: 9px solid #4a4a4a; border-bottom: 0; pointer-events: none; }
.pair { display: flex; gap: 12px; }
.dialog-body input { flex: 1; padding: 0 4px; background: #fff; }
.dialog-body .focus { border-color: #5294e8; background: linear-gradient(#fbfcfe, #dfe4ec); }
.actions { grid-column: 1 / 3; display: flex; justify-content: flex-end; gap: 12px; }
.pointer { position: absolute; left: 500px; top: 255px; width: 402px; height: 344px; pointer-events: none; }
</style>
